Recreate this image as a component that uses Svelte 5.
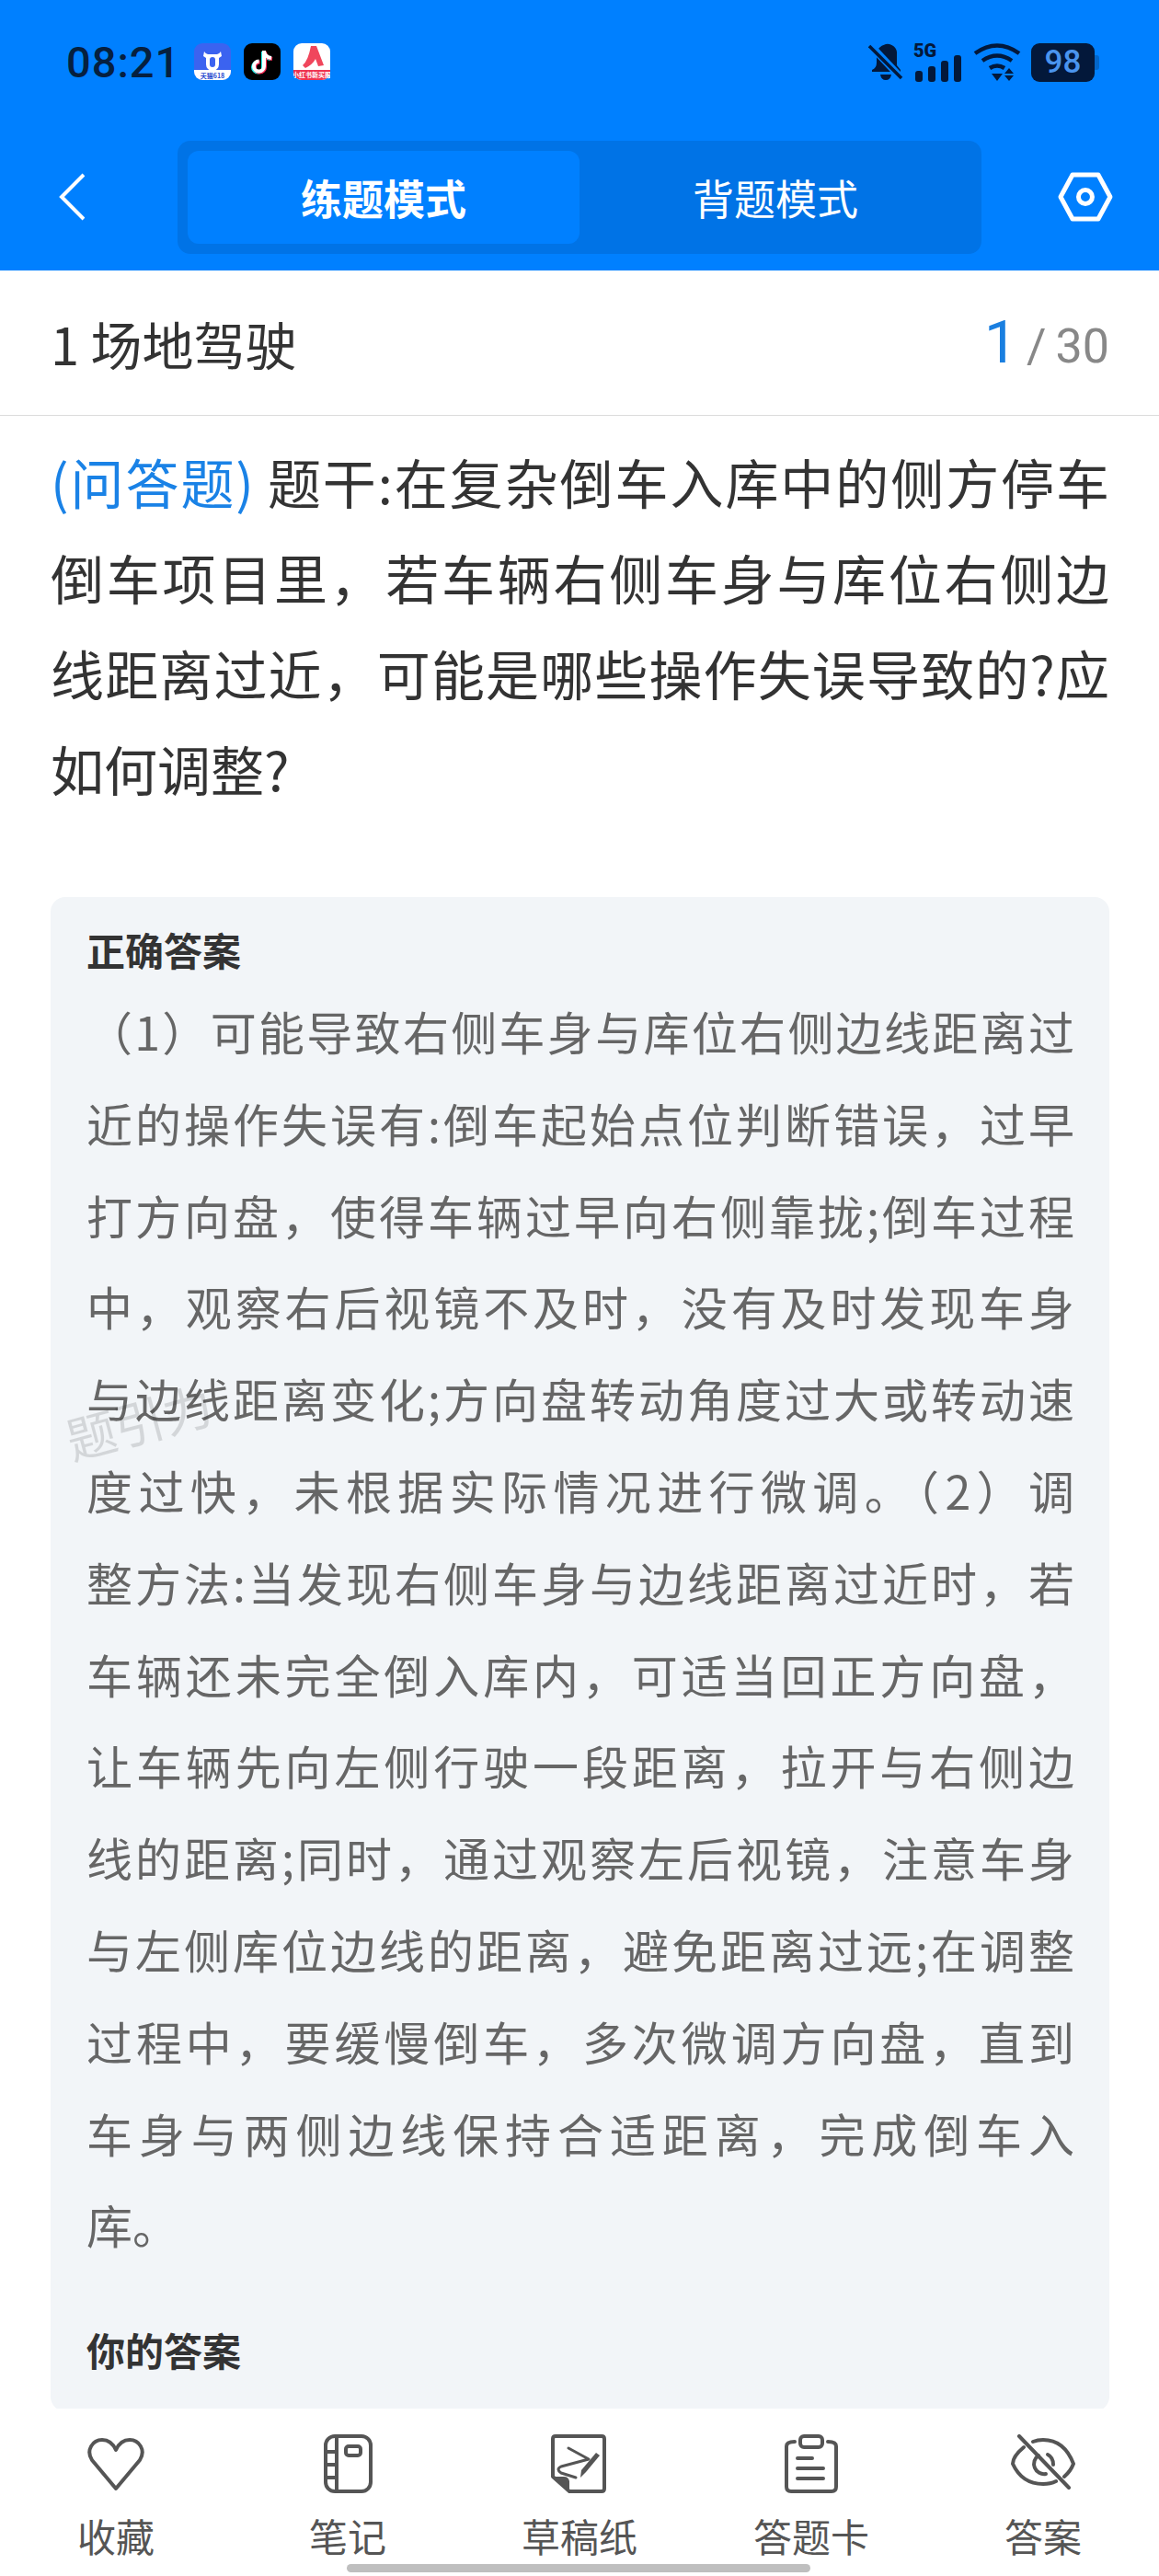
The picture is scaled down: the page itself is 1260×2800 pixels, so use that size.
<script>
	const answerLines = [
		'（1）可能导致右侧车身与库位右侧边线距离过',
		'近的操作失误有:倒车起始点位判断错误，过早',
		'打方向盘，使得车辆过早向右侧靠拢;倒车过程',
		'中，观察右后视镜不及时，没有及时发现车身',
		'与边线距离变化;方向盘转动角度过大或转动速',
		'度过快，未根据实际情况进行微调。（2）调',
		'整方法:当发现右侧车身与边线距离过近时，若',
		'车辆还未完全倒入库内，可适当回正方向盘，',
		'让车辆先向左侧行驶一段距离，拉开与右侧边',
		'线的距离;同时，通过观察左后视镜，注意车身',
		'与左侧库位边线的距离，避免距离过远;在调整',
		'过程中，要缓慢倒车，多次微调方向盘，直到',
		'车身与两侧边线保持合适距离，完成倒车入'
	];
</script>

<div class="page">
	<header class="header">
		<div class="status">
			<span class="time">08:21</span>
			<div class="apps">
				<svg class="app" viewBox="0 0 40 40">
					<rect width="40" height="40" rx="9" fill="#3b63f0" />
					<path d="M0 29h40v2a9 9 0 0 1-9 9H9a9 9 0 0 1-9-9z" fill="#fff" />
					<path d="M11 9q2 3 4 3h10q2 0 4-3l1 5-3 2v7a7 7 0 0 1-14 0v-7l-3-2z" fill="#fff" />
					<rect x="17" y="15" width="6" height="11" rx="3" fill="#3b63f0" />
					<text x="20" y="37.5" class="app-tx" fill="#2a4bd0">天猫618</text>
				</svg>
				<svg class="app" viewBox="0 0 40 40">
					<rect width="40" height="40" rx="9" fill="#000" />
					<path d="M22 8v17a5.5 5.5 0 1 1-5.500-5.500M22 9q1 6 8 7" fill="none" stroke="#25f4ee" stroke-width="4" transform="translate(-1 1)" />
					<path d="M22 8v17a5.500 5.500 0 1 1-5.500-5.500M22 9q1 6 8 7" fill="none" stroke="#fe2c55" stroke-width="4" transform="translate(1 1)" />
					<path d="M22 8v17a5.500 5.500 0 1 1-5.500-5.500M22 9q1 6 8 7" fill="none" stroke="#fff" stroke-width="4" />
				</svg>
				<svg class="app" viewBox="0 0 40 40">
					<rect width="40" height="40" rx="9" fill="#fff" />
					<path d="M0 29h40v2a9 9 0 0 1-9 9H9a9 9 0 0 1-9-9z" fill="#ee3350" />
					<path d="M19 3h6l8 21-6 1-3-8q-3 6-11 10l-3-3q6-5 9-21z" fill="#f0465c" />
					<text x="20" y="37" class="app-tx" fill="#fff">小红书新买服</text>
				</svg>
			</div>
			<div class="sys">
				<svg class="bell" viewBox="0 0 38 41">
					<path d="M19 1a10 10 0 0 1 12 11v12l4 5v2H4v-2q5-2 5-8v-9Q9 4 19 1zM13 34h12q-1 6-6 6t-6-6z" fill="#03183a" />
					<path d="M2 2 36 38" stroke="#0080ff" stroke-width="8" />
					<path d="M1 3 36 38" stroke="#03183a" stroke-width="3.500" />
				</svg>
				<div class="net">
					<span class="fiveg">5G</span>
					<div class="bars">
						<i style="height: 12px"></i>
						<i style="height: 17px"></i>
						<i style="height: 23px"></i>
						<i style="height: 29px"></i>
					</div>
				</div>
				<svg class="wifi" viewBox="0 0 52 42">
					<g fill="none" stroke="#03183a" stroke-width="4.500">
						<path d="M2 11q24-17 48 0" />
						<path d="M10 19q16-11 32 0" />
						<path d="M18 27q8-5 16 0" />
					</g>
					<path d="M20 33h12l-6 8zM39 27l5 6H34zM34 35h10l-5 6z" fill="#03183a" />
				</svg>
				<div class="battery">
					<span>98</span>
				</div>
			</div>
		</div>
		<div class="toolbar">
			<svg class="back" viewBox="0 0 28 52">
				<path d="M27 2 3 26l24 24" fill="none" stroke="#fff" stroke-width="4" />
			</svg>
			<div class="segment">
				<div class="seg active">练题模式</div>
				<div class="seg">背题模式</div>
			</div>
			<svg class="setting" viewBox="0 0 60 54">
				<path d="M16 3h28l13 24-13 24H16L3 27z" fill="none" stroke="#fff" stroke-width="5" stroke-linejoin="round" />
				<circle cx="30" cy="27" r="7.500" fill="none" stroke="#fff" stroke-width="5" />
			</svg>
		</div>
	</header>

	<div class="titlebar">
		<span class="title">1 场地驾驶</span>
		<span class="count"><b>1</b><em>/</em>30</span>
	</div>

	<main class="content">
		<div class="question">
			<p><span class="type">(问答题)</span> 题干:在复杂倒车入库中的侧方停车</p>
			<p>倒车项目里，若车辆右侧车身与库位右侧边</p>
			<p>线距离过近，可能是哪些操作失误导致的?应</p>
			<p class="last">如何调整?</p>
		</div>

		<section class="card">
			<h3>正确答案</h3>
			<div class="answer">
				{#each answerLines as line}
					<p>{line}</p>
				{/each}
				<p class="last">库。</p>
			</div>
			<h3 class="yours">你的答案</h3>
		</section>

		<div class="watermark">题引力</div>
	</main>

	<nav class="tabbar">
		<div class="tab">
			<svg viewBox="0 0 64 64"><path d="M32 59 6 28C-1 17 7 6 17 6q10 0 15 11Q37 6 47 6c10 0 18 11 11 22z" class="ln" /></svg>
			<span>收藏</span>
		</div>
		<div class="tab">
			<svg viewBox="0 0 64 64">
				<rect x="8" y="2" width="49" height="60" rx="10" class="ln" />
				<path d="M20 2v60M8 19h12M8 33h12M8 47h12" class="ln" />
				<rect x="30" y="13" width="16" height="10" rx="3" class="ln" />
			</svg>
			<span>笔记</span>
		</div>
		<div class="tab">
			<svg viewBox="0 0 64 64">
				<path d="M6 2h50q3 0 3 3v54q0 3-3 3H21L3 46V5q0-3 3-3z" class="ln" />
				<path d="M4 46h11q5 0 6 5v10z" fill="#555" />
				<path d="M20 15 42 27 12 35q-6 3 0 7l16 5" class="ln thin" />
				<path d="M54 23 39 41l-6 6 1-8 16-19z" fill="#555" />
			</svg>
			<span>草稿纸</span>
		</div>
		<div class="tab">
			<svg viewBox="0 0 64 64">
				<path d="M14 8q-9 0-9 5v44q0 5 5 5h44q5 0 5-5V13q0-5-9-5" class="ln" />
				<rect x="20" y="2" width="24" height="12" rx="4" class="ln" />
				<path d="M17 26h16M17 37h28M17 48h28" class="ln" />
			</svg>
			<span>答题卡</span>
		</div>
		<div class="tab">
			<svg viewBox="0 0 70 64">
				<path d="M14 14Q2 24 2 32q10 22 33 22 8 0 14-3M24 8q5-2 11-2 23 0 33 26-3 8-10 14" class="ln" />
				<path d="M30 23a11 11 0 0 0 8 20M40 22q6 3 6 11" class="ln" />
				<path d="M9 2 63 58" class="ln" />
			</svg>
			<span>答案</span>
		</div>
		<div class="home"></div>
	</nav>
</div>

<style>
	:global(body) {
		margin: 0;
		background: #fff;
	}
	.page {
		position: relative;
		width: 1260px;
		height: 2800px;
		display: flex;
		flex-direction: column;
		overflow: hidden;
		font-family: 'Noto Sans CJK SC', 'Noto Sans', sans-serif;
		color: #333;
	}
	p,
	h3 {
		margin: 0;
	}

	.header {
		background: #0080ff;
		height: 294px;
		flex: none;
	}
	.status {
		height: 134px;
		box-sizing: border-box;
		padding: 47px 70px 0 72px;
		display: flex;
		align-items: flex-start;
	}
	.time {
		font-family: Roboto, sans-serif;
		font-size: 47px;
		line-height: 42px;
		font-weight: 500;
		color: #06203f;
		letter-spacing: 1px;
		width: 139px;
	}
	.apps {
		display: flex;
		gap: 14px;
	}
	.app {
		width: 40px;
		height: 40px;
	}
	.app-tx {
		font-size: 7px;
		text-anchor: middle;
		font-weight: 700;
	}
	.sys {
		margin-left: auto;
		display: flex;
		align-items: flex-start;
	}
	.bell {
		width: 38px;
		height: 41px;
	}
	.net {
		position: relative;
		width: 50px;
		height: 42px;
		margin-left: 13px;
	}
	.fiveg {
		position: absolute;
		left: -2px;
		top: -3px;
		font-family: Roboto, sans-serif;
		font-size: 20px;
		line-height: 22px;
		font-weight: 900;
		color: #03183a;
	}
	.bars {
		position: absolute;
		left: 0;
		bottom: 0;
		display: flex;
		align-items: flex-end;
		gap: 6px;
	}
	.bars i {
		display: block;
		width: 8px;
		border-radius: 3px;
		background: #03183a;
	}
	.wifi {
		width: 52px;
		height: 42px;
		margin-left: 13px;
	}
	.battery {
		position: relative;
		width: 69px;
		height: 42px;
		margin-left: 11px;
		border-radius: 9px;
		background: #03183a;
		display: flex;
		align-items: center;
		justify-content: center;
	}
	.battery::after {
		content: '';
		position: absolute;
		right: -5px;
		top: 13px;
		width: 5px;
		height: 16px;
		border-radius: 0 3px 3px 0;
		background: #0466c8;
	}
	.battery span {
		font-family: Roboto, sans-serif;
		font-size: 35px;
		font-weight: 500;
		line-height: 42px;
		color: #4a94ee;
	}
	.toolbar {
		height: 160px;
		display: flex;
		align-items: center;
		padding: 0 50px 0 64px;
	}
	.back {
		width: 28px;
		height: 52px;
	}
	.segment {
		display: flex;
		width: 875px;
		height: 123px;
		box-sizing: border-box;
		padding: 11px;
		margin-left: 101px;
		border-radius: 14px;
		background: #0073e6;
	}
	.seg {
		flex: 1;
		display: flex;
		align-items: center;
		justify-content: center;
		font-size: 45px;
		color: #fff;
		border-radius: 12px;
	}
	.seg.active {
		background: #0080ff;
		font-weight: 700;
	}
	.setting {
		width: 60px;
		height: 54px;
		margin-left: 83px;
	}

	.titlebar {
		flex: none;
		height: 158px;
		box-sizing: border-box;
		border-bottom: 1px solid #dcdcdc;
		padding: 0 54px 0 55px;
		display: flex;
		align-items: center;
		justify-content: space-between;
	}
	.title {
		font-size: 56px;
		color: #333;
	}
	.count {
		font-family: Roboto, sans-serif;
		font-size: 52px;
		color: #888;
	}
	.count b {
		font-size: 64px;
		font-weight: 400;
		color: #1a7fe0;
	}
	.count em {
		font-style: normal;
		margin: 0 10px;
	}

	.content {
		flex: 1;
		min-height: 0;
		position: relative;
		overflow: hidden;
		padding: 19px 54px 0 55px;
	}
	.question {
		font-size: 58px;
		line-height: 104px;
		color: #333;
	}
	.question p,
	.answer p {
		text-align: justify;
		text-align-last: justify;
	}
	.question p.last,
	.answer p.last {
		text-align-last: left;
	}
	.type {
		color: #1a82e6;
	}
	.card {
		margin-top: 88px;
		padding: 30px 38px 0 39px;
		border-radius: 16px;
		background: #f2f5f8;
	}
	h3 {
		font-size: 42px;
		line-height: 54px;
		font-weight: 700;
		color: #333;
	}
	.answer {
		margin-top: 12px;
		font-size: 50px;
		line-height: 99.8px;
		color: #666;
	}
	.yours {
		margin-top: 59px;
		padding-bottom: 40px;
	}
	.watermark {
		position: absolute;
		left: 70px;
		top: 1062px;
		font-size: 54px;
		line-height: 60px;
		color: #000;
		opacity: 0.12;
		transform: rotate(-15deg);
	}

	.tabbar {
		position: relative;
		flex: none;
		height: 182px;
		display: grid;
		grid-template-columns: repeat(5, 252px);
	}
	.tab {
		display: flex;
		flex-direction: column;
		align-items: center;
		padding-top: 28px;
		color: #555;
	}
	.tab svg {
		height: 64px;
		width: auto;
		display: block;
	}
	.tab span {
		margin-top: 16px;
		font-size: 42px;
		line-height: 60px;
	}
	.ln {
		fill: none;
		stroke: #555;
		stroke-width: 4;
		stroke-linecap: round;
		stroke-linejoin: round;
	}
	.thin {
		stroke-width: 3;
	}
	.home {
		position: absolute;
		left: 377px;
		top: 169px;
		width: 504px;
		height: 9px;
		border-radius: 5px;
		background: #bfbfbf;
	}
</style>
